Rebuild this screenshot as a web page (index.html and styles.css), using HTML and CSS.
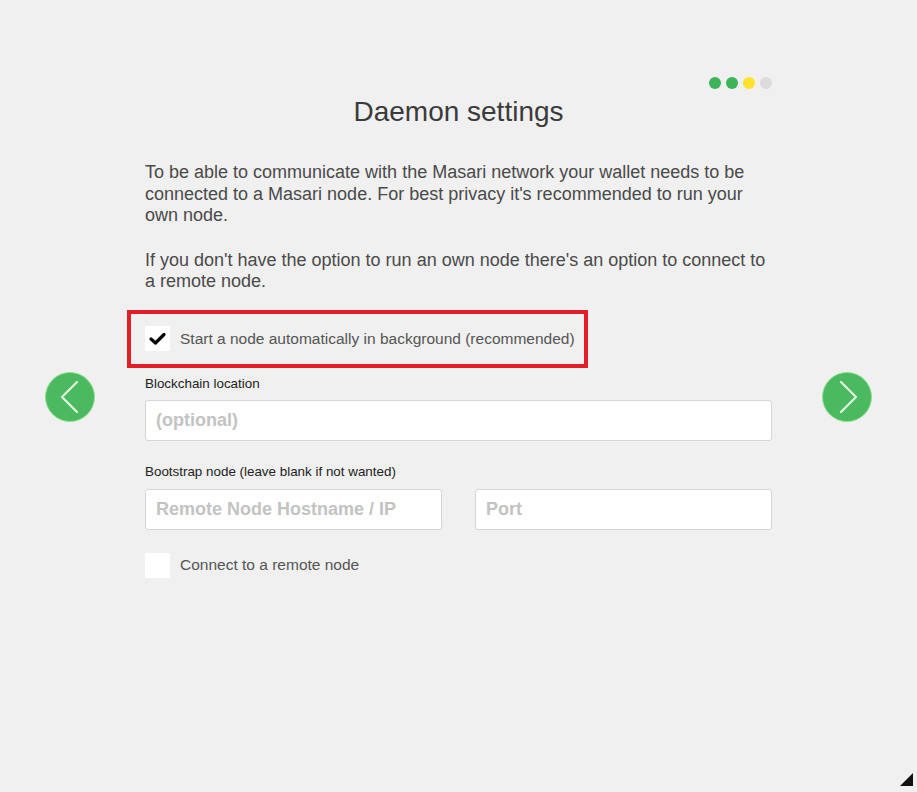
FILE: index.html
```html
<!DOCTYPE html>
<html>
<head>
<meta charset="utf-8">
<title>Daemon settings</title>
<link rel="stylesheet" href="styles.css">
</head>
<body>
<div class="page">
  <div class="nav">
    <button class="nav-btn" aria-label="Previous">
      <svg width="50" height="50" viewBox="0 0 50 50"><circle cx="25" cy="25" r="24.5" fill="#4bb960" stroke="#8ee08c" stroke-width="1"/><polyline points="32,10 17,25 32,40" fill="none" stroke="#e3f7dd" stroke-width="2.2" stroke-linecap="round" stroke-linejoin="round"/></svg>
    </button>
  </div>
  <main class="content">
    <div class="steps">
      <span class="dot done"></span><span class="dot done"></span><span class="dot current"></span><span class="dot"></span>
    </div>
    <h1 class="title">Daemon settings</h1>
    <p class="text">To be able to communicate with the Masari network your wallet needs to be connected to a Masari node. For best privacy it's recommended to run your own node.</p>
    <p class="text">If you don't have the option to run an own node there's an option to connect to a remote node.</p>
    <div class="highlight">
      <label class="check">
        <span class="box"><svg width="25" height="25" viewBox="0 0 25 25"><polyline points="6,13 10.5,17 19,8.5" fill="none" stroke="#000" stroke-width="3.2" stroke-linecap="round" stroke-linejoin="round"/></svg></span>
        <span class="check-label">Start a node automatically in background (recommended)</span>
      </label>
    </div>
    <div class="field-label first">Blockchain location</div>
    <div class="input full first-input"><span class="ph">(optional)</span></div>
    <div class="field-label">Bootstrap node (leave blank if not wanted)</div>
    <div class="row">
      <div class="input"><span class="ph">Remote Node Hostname / IP</span></div>
      <div class="input"><span class="ph">Port</span></div>
    </div>
    <label class="check second">
      <span class="box"></span>
      <span class="check-label">Connect to a remote node</span>
    </label>
  </main>
  <div class="nav">
    <button class="nav-btn" aria-label="Next">
      <svg width="50" height="50" viewBox="0 0 50 50"><circle cx="25" cy="25" r="24.5" fill="#4bb960" stroke="#8ee08c" stroke-width="1"/><polyline points="19,10 34,25 19,40" fill="none" stroke="#e3f7dd" stroke-width="2.2" stroke-linecap="round" stroke-linejoin="round"/></svg>
    </button>
  </div>
  <div class="grip"></div>
</div>
</body>
</html>
```
FILE: styles.css
```css
html, body {
  margin: 0;
  padding: 0;
  background: #f0f0f0;
}
body {
  font-family: "Liberation Sans", Arial, sans-serif;
  color: #444;
}
.page {
  position: relative;
  width: 917px;
  height: 792px;
  display: flex;
  flex-direction: row;
  align-items: flex-start;
  padding: 0 45px;
  box-sizing: border-box;
  gap: 50px;
  overflow: hidden;
}
.nav {
  width: 50px;
  padding-top: 372px;
}
.nav-btn {
  width: 50px;
  height: 50px;
  padding: 0;
  border: 0;
  background: transparent;
  display: block;
}
.nav-btn svg { display: block; }
.content {
  width: 627px;
  padding-top: 77px;
}
.steps {
  display: flex;
  justify-content: flex-end;
  gap: 5px;
}
.dot {
  width: 12px;
  height: 12px;
  border-radius: 50%;
  background: #dcdcdc;
}
.dot.done { background: #3db35a; }
.dot.current { background: #fde12a; }
.title {
  margin: 5px 0 0;
  text-align: center;
  font-size: 28px;
  font-weight: normal;
  color: #3b3b3b;
  line-height: 36px;
}
.text {
  margin: 0;
  font-size: 18px;
  line-height: 21.5px;
  color: #4a4a4a;
}
.title + .text { margin-top: 32px; }
.text + .text { margin-top: 23px; }
.highlight {
  margin: 17px 0 0 -18px;
  width: 461px;
  height: 58px;
  box-sizing: border-box;
  border: 4px solid #e41e26;
  display: flex;
  align-items: center;
  padding-left: 14px;
}
.check {
  display: flex;
  align-items: center;
  gap: 10px;
}
.box {
  width: 25px;
  height: 25px;
  background: #fff;
  display: block;
}
.box svg { display: block; }
.check-label {
  font-size: 15.5px;
  color: #555;
}
.field-label {
  font-size: 13.4px;
  color: #222;
  margin-top: 23px;
  line-height: 16px;
}
.field-label.first { margin-top: 8px; }
.input {
  height: 41px;
  box-sizing: border-box;
  background: #fff;
  border: 1px solid #d6d6d6;
  border-radius: 3px;
  display: flex;
  align-items: center;
  padding-left: 10px;
  margin-top: 9px;
}
.input.first-input { margin-top: 8px; }
.full { width: 627px; }
.row {
  display: flex;
  gap: 33px;
}
.row .input { width: 297px; }
.ph {
  font-size: 18px;
  font-weight: bold;
  color: #c3c3c3;
}
.check.second { margin-top: 23px; }
.grip {
  position: absolute;
  right: 4px;
  bottom: 6px;
  width: 0;
  height: 0;
  border-left: 13px solid transparent;
  border-bottom: 13px solid #111;
}
```
